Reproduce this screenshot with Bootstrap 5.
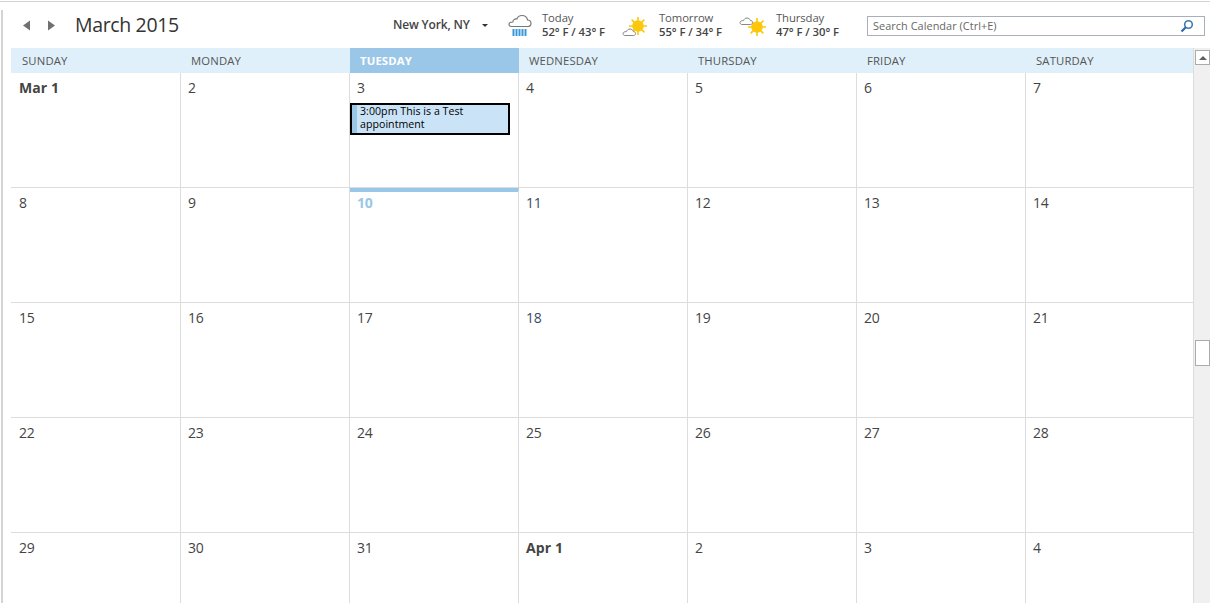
<!DOCTYPE html>
<html lang="en">
<head>
<meta charset="utf-8">
<title>Calendar</title>
<link rel="stylesheet" href="https://cdn.jsdelivr.net/npm/bootstrap@5.3.0/dist/css/bootstrap.min.css">
<style>
html,body{height:603px;overflow:hidden;background:#fff}
body{font-family:"Open Sans","Noto Sans",sans-serif;color:#444;padding-top:1px}
.shell{height:602px;overflow:hidden;border-top:1px solid #d4d4d4}
.frame{margin-top:8px;border-left:2px solid #d4d4d4;margin-left:1px;height:593px;padding-left:8px}
.topbar{height:38px;padding-bottom:8px}
.navarrows{width:64px;padding-left:11px;gap:16px}
.title-month{font-size:19.5px;color:#333;line-height:1;width:318px;letter-spacing:-.35px}
.locname{font-size:12px;font-weight:600;color:#444;width:89px;letter-spacing:-.15px}
.caret-mini{width:0;height:0;border:3px solid transparent;border-top:3px solid #333;border-bottom:0}
.locwrap{width:115px}
.wx{font-size:11.3px;line-height:14.5px;color:#555;letter-spacing:-.1px}
.wx b{font-weight:600;display:block;color:#444;letter-spacing:-.05px}
.wx-a{width:117px}
.wx-i{width:34px}
.wx-i .wx-sun{margin-left:-3px}
.searchbox{width:338px;height:20px;border:1px solid #a9b0bb;margin:2px 0 0 8px;font-size:10.9px;color:#666;padding:0 10px 0 5px;letter-spacing:.05px}
.calrow{height:555px}
.calgrid{width:1182px}
.heads{display:grid;grid-template-columns:170px repeat(5,169px) 168px;height:25px;background:#dff0fa;font-size:11.3px;color:#555;letter-spacing:.15px}
.hcell{padding-left:10px;line-height:25px}
.hcell:first-child{padding-left:11px}
.hcell-today{background:#9ac7e8;color:#fff;font-weight:700}
.days{display:grid;grid-template-columns:170px repeat(5,169px) 168px;grid-auto-rows:115px}
.daycell{border-right:1px solid #dcdcdc;border-bottom:1px solid #dcdcdc;padding:5px 7px 0;font-size:14px;line-height:20px;color:#444;letter-spacing:-.2px}
.daycell:nth-child(7n){border-right:0}
.daycell:nth-child(7n+1){padding-left:8px}
.dnow{border-top:4px solid #9ac7e8;padding-top:1px;color:#9ac7e8;font-weight:700}
.dfirst{font-weight:700;color:#444;letter-spacing:.1px}
.dblue{color:#3a4a6b}
.appt{width:160px;height:32px;border:2px solid #000;background:#cbe3f7;margin:5px 0 0 -7px;color:#000;font-size:10.6px;line-height:12.5px;font-weight:400;letter-spacing:.04px;box-shadow:inset 5px 0 0 #9ac7e8;padding-left:8px;overflow:hidden}
.scroller{width:17px;background:#f0f0f0;border-left:1px solid #dcdcdc}
.sb-up{width:15px;height:15px;background:#fff;border:1px solid #ababab;margin:2px 0 0 1px}
.sb-thumb{width:15px;height:26px;background:#fff;border:1px solid #ababab;margin:275px 0 0 1px}
.sb-tri{width:0;height:0;border:4px solid transparent;border-bottom:4px solid #606060;border-top:0}
</style>
</head>
<body>
<div class="shell">
<div class="frame">
  <div class="topbar d-flex align-items-center">
    <div class="navarrows d-flex align-items-center">
      <svg width="9" height="11" viewBox="0 0 9 11"><path d="M8 0.5V10.5L1 5.5Z" fill="#707070"/></svg>
      <svg width="9" height="11" viewBox="0 0 9 11"><path d="M1 0.5V10.5L8 5.5Z" fill="#707070"/></svg>
    </div>
    <div class="title-month">March 2015</div>
    <div class="locwrap d-flex align-items-center"><span class="locname">New York, NY</span><span class="caret-mini"></span></div>
    <div class="wx-a d-flex align-items-center">
      <div class="wx-i">
        <svg width="24" height="24" viewBox="0 0 24 24"><path d="M5 12.5H19.5C22 12.5 23 10.8 23 9.2C23 7.4 21.6 6 19.6 6C19 3.2 16.6 1.5 14 1.5C11.6 1.5 9.6 2.8 8.8 5C6.6 4.6 5 6 4.8 8C2.8 8 1 9 1 10.4C1 11.6 2.6 12.5 5 12.5Z" fill="#fff" stroke="#777" stroke-width="1.2"/><path d="M5.5 15V22M8.5 15V22M11.5 15V22M14.5 15V22M17.5 15V22" stroke="#3b97d8" stroke-width="2"/></svg>
      </div>
      <div class="wx">Today<b>52° F / 43° F</b></div>
    </div>
    <div class="wx-a d-flex align-items-center">
      <div class="wx-i">
        <svg class="wx-sun" width="26" height="22" viewBox="0 0 26 22"><g stroke="#fdc80c" stroke-width="1.6"><path d="M16 2V20M7 11H25M9.6 4.6L22.4 17.4M22.4 4.6L9.6 17.4"/></g><circle cx="16" cy="11" r="5.8" fill="#fdc80c"/><path d="M3 20.5H11.5C13 20.5 13.6 19.4 13.6 18.5C13.6 17.4 12.6 16.5 11.4 16.6C10.8 14.8 9.4 14 8 14C6.4 14 5 15 4.6 16.6C2.6 16.4 1 17.4 1 18.6C1 19.6 1.8 20.5 3 20.5Z" fill="#fff" stroke="#888" stroke-width="1"/></svg>
      </div>
      <div class="wx">Tomorrow<b>55° F / 34° F</b></div>
    </div>
    <div class="wx-a d-flex align-items-center">
      <div class="wx-i">
        <svg class="wx-sun" width="28" height="22" viewBox="0 0 28 22"><g stroke="#fdc80c" stroke-width="1.6"><path d="M18 3V21M9 12H27M11.6 5.6L24.4 18.4M24.4 5.6L11.6 18.4"/></g><circle cx="18" cy="12" r="5.8" fill="#fdc80c"/><path d="M3 9.5H11.5C13 9.5 13.6 8.4 13.6 7.5C13.6 6.4 12.6 5.5 11.4 5.6C10.8 3.8 9.4 3 8 3C6.4 3 5 4 4.6 5.6C2.6 5.4 1 6.4 1 7.6C1 8.6 1.8 9.5 3 9.5Z" fill="#fff" stroke="#888" stroke-width="1"/></svg>
      </div>
      <div class="wx">Thursday<b>47° F / 30° F</b></div>
    </div>
    <div class="searchbox d-flex align-items-center justify-content-between">
      <span>Search Calendar (Ctrl+E)</span>
      <svg width="14" height="14" viewBox="0 0 14 14"><circle cx="8.5" cy="5.5" r="3.8" fill="none" stroke="#3f78b0" stroke-width="1.6"/><path d="M5.8 8.2L1.5 12.5" stroke="#2f6aa5" stroke-width="2.2"/></svg>
    </div>
  </div>
  <div class="calrow d-flex">
    <div class="calgrid">
      <div class="heads">
        <div class="hcell">SUNDAY</div><div class="hcell">MONDAY</div><div class="hcell hcell-today">TUESDAY</div><div class="hcell">WEDNESDAY</div><div class="hcell">THURSDAY</div><div class="hcell">FRIDAY</div><div class="hcell">SATURDAY</div>
      </div>
      <div class="days" id="days"></div>
    </div>
    <div class="scroller">
      <div class="sb-up d-flex align-items-center justify-content-center"><span class="sb-tri"></span></div>
      <div class="sb-thumb"></div>
    </div>
  </div>
</div>
</div>
<script>
const cells=["Mar 1",2,3,4,5,6,7,8,9,10,11,12,13,14,15,16,17,18,19,20,21,22,23,24,25,26,27,28,29,30,31,"Apr 1",2,3,4];
const box=document.getElementById('days');
cells.forEach((c,i)=>{
  const d=document.createElement('div');
  d.className='daycell';
  if(typeof c==='string')d.classList.add('dfirst');
  if(i===9)d.classList.add('dnow');
  if(i===10||i===17)d.classList.add('dblue');
  d.textContent=c;
  if(i===2){
    const a=document.createElement('div');
    a.className='appt';
    a.textContent='3:00pm This is a Test appointment';
    d.appendChild(a);
  }
  box.appendChild(d);
});
</script>
<script src="https://cdn.jsdelivr.net/npm/bootstrap@5.3.0/dist/js/bootstrap.bundle.min.js"></script>
</body>
</html>
